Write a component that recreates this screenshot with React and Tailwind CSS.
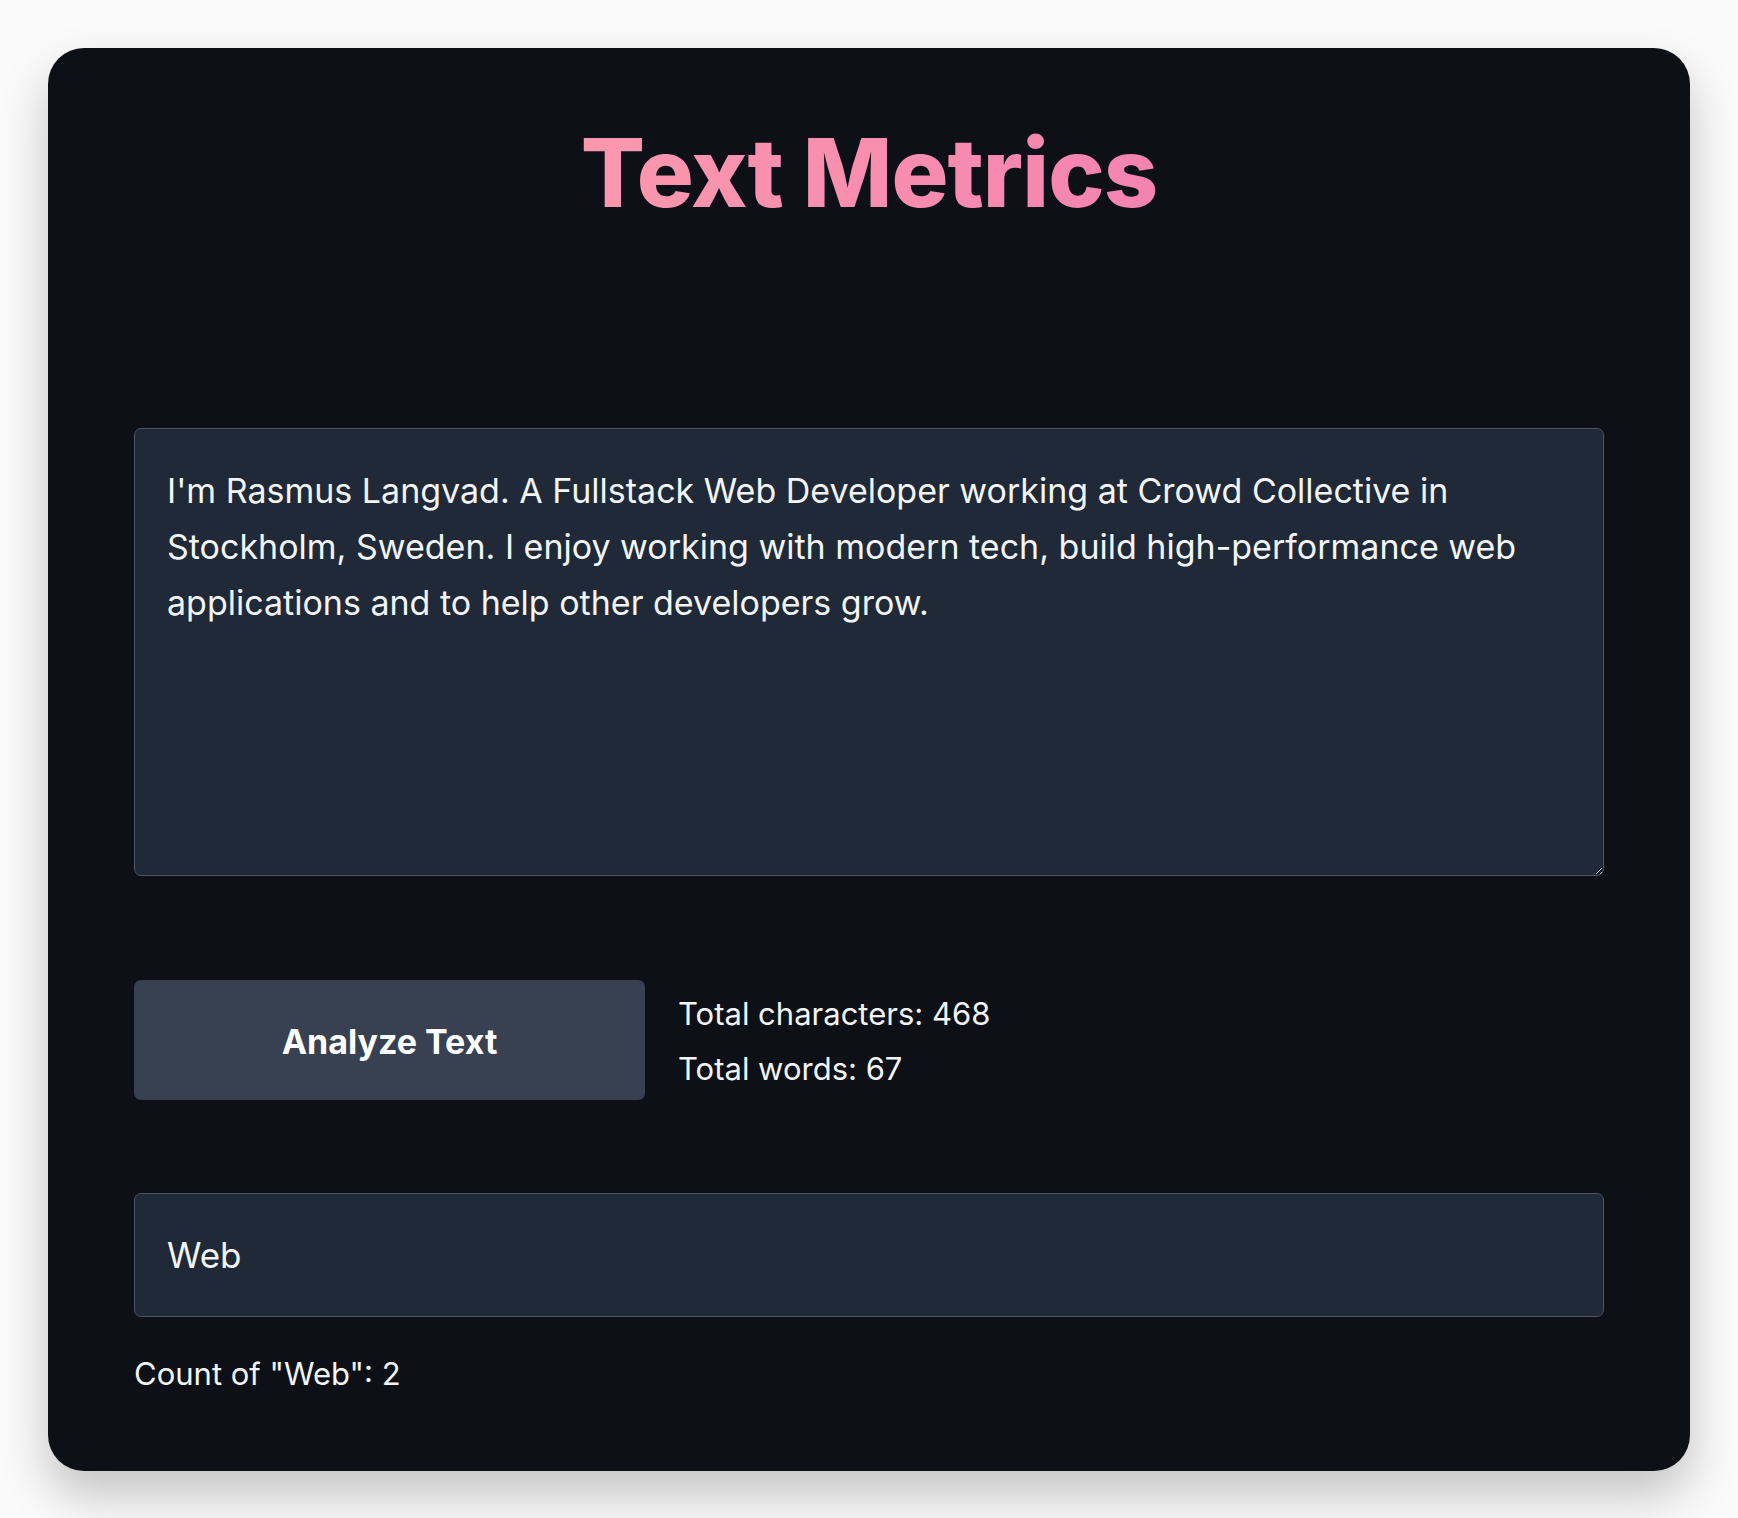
import { useState } from 'react';

const initialText =
  "I'm Rasmus Langvad. A Fullstack Web Developer working at Crowd Collective in Stockholm, Sweden. I enjoy working with modern tech, build high-performance web applications and to help other developers grow.";

const App = () => {
  const [text, setText] = useState(initialText);
  const [word, setWord] = useState('Web');

  // case-insensitive whole word count
  const count = word
    ? text
        .toLowerCase()
        .split(/[^a-z0-9'-]+/)
        .filter((w) => w === word.toLowerCase()).length
    : 0;

  return (
    <div className="min-h-screen bg-[#fafafa] p-[48px] font-['Inter',sans-serif]">
      <div className="rounded-[36px] bg-[#0d1117] px-[86px] pt-[77px] pb-[69px] shadow-[0_24px_48px_rgba(0,0,0,0.22)]">
        <h1 className="text-center text-[95px] font-extrabold leading-none tracking-[-0.01em]">
          <span className="bg-gradient-to-r from-[#fb98ad] to-[#f483b1] bg-clip-text text-transparent">
            Text Metrics
          </span>
        </h1>

        <textarea
          className="mt-[208px] block h-[448px] w-full rounded-[7px] border-[1.5px] border-[#4b5563] bg-[#1f2937] px-[32px] py-[34px] text-[34px] leading-[56px] text-[#f3f4f6] outline-none"
          value={text}
          onChange={(e) => setText(e.target.value)}
        />

        <div className="mt-[104px] flex items-start gap-[33px]">
          <button className="h-[120px] w-[511px] rounded-[7px] bg-[#374151] pt-[3px] text-[34px] font-bold text-white">
            Analyze Text
          </button>
          <div className="pt-[6px] text-[31px] leading-[55px] text-[#f3f4f6]">
            <p>Total characters: 468</p>
            <p>Total words: 67</p>
          </div>
        </div>

        <input
          className="mt-[93px] block h-[124px] w-full rounded-[7px] border-[1.5px] border-[#4b5563] bg-[#1f2937] px-[32px] text-[35px] text-[#f3f4f6] outline-none"
          value={word}
          onChange={(e) => setWord(e.target.value)}
        />

        <p className="mt-[29px] text-[31px] leading-[56px] text-[#f3f4f6]">
          Count of "{word}": {count}
        </p>
      </div>
    </div>
  );
};

export default App;
